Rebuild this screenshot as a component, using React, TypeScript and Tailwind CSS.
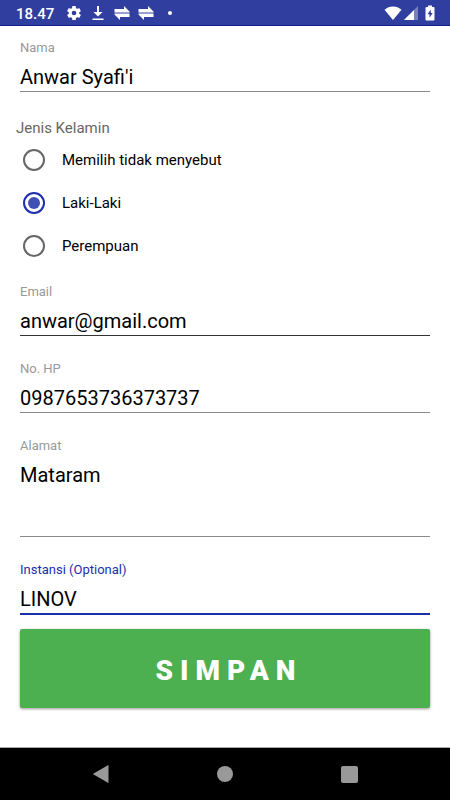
import { useState } from "react";

const fieldInput =
  "mt-2 block w-full resize-none rounded-none bg-transparent text-xl leading-[26px] text-black outline-none";

type FieldProps = {
  id: string;
  label: string;
  type?: string;
  defaultValue: string;
  variant?: "default" | "dark" | "active";
  multiline?: boolean;
};

function Field({
  id,
  label,
  type = "text",
  defaultValue,
  variant = "default",
  multiline = false,
}: FieldProps) {
  const line = {
    default: "border-b border-[#8a8a8a] pb-px",
    dark: "border-b border-[#333333] pb-px",
    active: "border-b-2 border-[#1b2fae] pb-px",
  }[variant];

  return (
    <div>
      <label
        htmlFor={id}
        className={`block text-[13px] leading-4 ${
          variant === "active" ? "text-[#1b2fae]" : "text-[#999999]"
        }`}
      >
        {label}
      </label>
      {multiline ? (
        <textarea
          id={id}
          defaultValue={defaultValue}
          className={`${fieldInput} ${line} h-[75px]`}
        />
      ) : (
        <input
          id={id}
          type={type}
          defaultValue={defaultValue}
          className={`${fieldInput} ${line}`}
        />
      )}
    </div>
  );
}

const genders = ["Memilih tidak menyebut", "Laki-Laki", "Perempuan"];

function GenderPicker() {
  const [gender, setGender] = useState("Laki-Laki");

  return (
    <fieldset className="mt-[26px]">
      <legend className="-ml-1 text-[15px] leading-5 text-[#666666]">
        Jenis Kelamin
      </legend>
      {genders.map((name) => (
        <label
          key={name}
          className="flex h-[43px] items-center gap-[17px] pl-[3px] text-[15px] text-black"
        >
          <input
            type="radio"
            name="gender"
            value={name}
            checked={gender === name}
            onChange={() => setGender(name)}
            className="grid size-[22px] shrink-0 appearance-none place-items-center rounded-full border-2 border-[#666666] before:size-3 before:rounded-full checked:border-[#1b2fae] checked:before:bg-[#3f51b5]"
          />
          <span className="pt-0.5">{name}</span>
        </label>
      ))}
    </fieldset>
  );
}

function SwapIcon() {
  return (
    <svg viewBox="0 0 16 16" className="h-4 w-4" fill="currentColor" aria-hidden>
      <path d="M.5 4H10V1l5.500 5.500v.8H.5z" />
      <path d="M15.500 12H6v3L.5 9.500v-.8h15z" />
      <path d="M.5 7.300h15v1.400H.5z" opacity=".5" />
    </svg>
  );
}

function StatusBar() {
  return (
    <header className="flex h-[26px] items-center border-b border-[#101d8c] bg-[#303f9f] pr-[15px] pl-4 text-white">
      <span className="pt-0.5 text-[15px] leading-6 font-medium">18.47</span>
      <div className="ml-3 flex items-center gap-2">
        <svg viewBox="1 1 22 22" className="h-4 w-4" fill="currentColor" aria-hidden>
          <path d="M19.14 12.94c.04-.3.06-.61.06-.94s-.02-.64-.07-.94l2.03-1.58a.49.49 0 0 0 .12-.61l-1.92-3.32a.49.49 0 0 0-.59-.22l-2.39.96a7 7 0 0 0-1.62-.94l-.36-2.54a.48.48 0 0 0-.48-.41h-3.84a.47.47 0 0 0-.47.41l-.36 2.54c-.59.24-1.13.57-1.62.94l-2.39-.96a.47.47 0 0 0-.59.22L2.740 8.870a.47.47 0 0 0 .12.61l2.030 1.580a6 6 0 0 0 0 1.880l-2.030 1.580a.49.49 0 0 0-.12.61l1.920 3.320c.12.22.37.29.59.22l2.390-.96c.5.38 1.030.7 1.620.94l.36 2.540c.05.24.24.41.48.41h3.840c.24 0 .44-.17.47-.41l.36-2.540a7 7 0 0 0 1.620-.94l2.390.96c.22.08.47 0 .59-.22l1.920-3.320a.47.47 0 0 0-.12-.61zM12 15.200a3.200 3.200 0 1 1 0-6.400 3.200 3.200 0 0 1 0 6.400z" />
        </svg>
        <svg viewBox="0 0 16 16" className="h-4 w-4" fill="currentColor" aria-hidden>
          <path d="M7 1h2v6h3.500L8 11.500 3.500 7H7zM2.500 13.500h11V15h-11z" />
        </svg>
        <SwapIcon />
        <SwapIcon />
        <span className="ml-1.5 size-1 rounded-full bg-white" />
      </div>
      <div className="ml-auto flex items-center">
        <svg viewBox="0 0 18 14" className="h-3.5 w-[18px]" fill="currentColor" aria-hidden>
          <path d="M9 14 .5 3.800C2.800 1.700 5.800.5 9 .5s6.200 1.200 8.500 3.300z" />
        </svg>
        <svg viewBox="0 0 14 14" className="ml-0.5 size-3.5" fill="currentColor" aria-hidden>
          <path d="M14 0v14H0z" opacity=".35" />
          <path d="M10 4v10H0z" />
        </svg>
        <svg viewBox="0 0 10 16" className="ml-[7px] h-4 w-2.5" fill="currentColor" aria-hidden>
          <path d="M3 .5h4V2h1.500q1 0 1 1v11.500q0 1-1 1h-7q-1 0-1-1V3q0-1 1-1H3z" />
          <path d="M5.800 4.500 2.500 9.300h2v3.500l3.200-4.900h-1.900z" fill="#303f9f" />
        </svg>
      </div>
    </header>
  );
}

function NavigationBar() {
  return (
    <nav className="flex h-[53px] items-center justify-around border-t border-[#aaaaaa] bg-black px-[38px] text-[#999999]">
      <button type="button" aria-label="Back">
        <svg viewBox="0 0 18 18" className="size-[18px]" fill="currentColor">
          <path d="M16.500.4v17.200q0 .6-.6.2L1.200 9.300q-.5-.3 0-.6L15.900.2q.6-.4.600.2z" />
        </svg>
      </button>
      <button type="button" aria-label="Home">
        <span className="block size-4 rounded-full bg-[#999999]" />
      </button>
      <button type="button" aria-label="Recent apps">
        <span className="block size-[17px] rounded-xs bg-[#999999]" />
      </button>
    </nav>
  );
}

export default function App() {
  return (
    <div className="flex min-h-screen flex-col bg-white font-[Roboto,sans-serif]">
      <StatusBar />
      <form
        className="grow px-5 pt-3.5 pb-5"
        onSubmit={(e) => e.preventDefault()}
      >
        <Field id="nama" label="Nama" defaultValue="Anwar Syafi'i" />
        <GenderPicker />
        <div className="mt-[17px] flex flex-col gap-[25px]">
          <Field
            id="email"
            label="Email"
            type="email"
            defaultValue="anwar@gmail.com"
            variant="dark"
          />
          <Field id="hp" label="No. HP" type="tel" defaultValue="0987653736373737" />
          <Field id="alamat" label="Alamat" defaultValue="Mataram" multiline />
          <Field
            id="instansi"
            label="Instansi (Optional)"
            defaultValue="LINOV"
            variant="active"
          />
        </div>
        <button
          type="submit"
          className="mt-3.5 h-[79px] w-full rounded-xs bg-[#4caf50] pt-1 pl-2 text-[28px] font-black tracking-[7px] text-white shadow-[0_1px_3px_rgba(0,0,0,0.4)]"
        >
          SIMPAN
        </button>
      </form>
      <NavigationBar />
    </div>
  );
}
